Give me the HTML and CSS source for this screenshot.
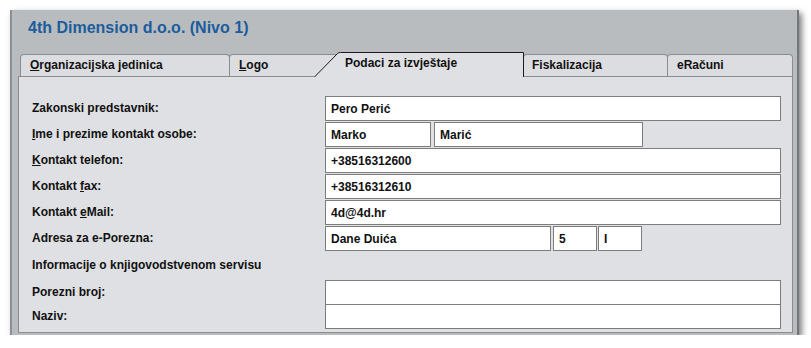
FILE: index.html
```html
<!DOCTYPE html>
<html lang="hr">
<head>
  <meta charset="UTF-8" />
  <meta name="viewport" content="width=device-width, initial-scale=1.0"/>
  <title>4th Dimension d.o.o. - Podaci za izvještaje</title>
  <link rel="stylesheet" href="styles.css">
</head>
<body>
  <div class="window">
    <h1 class="title">4th Dimension d.o.o. (Nivo 1)</h1>

    <div class="tabs">
      <div class="tab tab-org"><u>O</u>rganizacijska jedinica</div>
      <div class="tab tab-logo"><u>L</u>ogo</div>
      <div class="tab-active">
        <svg class="tab-shape" width="210" height="25" viewBox="0 0 210 25">
          <path d="M0 25 L23.5 1.5 Q24.5 0.5 26.5 0.5 L209.5 0.5 L209.5 25 Z" fill="#dfe0e3"/>
          <path d="M0.5 25 L23.5 1.5 Q24.5 0.5 26.5 0.5 L209.5 0.5 L209.5 25" fill="none" stroke="#1c1c1c" stroke-width="1"/>
        </svg>
        <span>Podaci za izvještaje</span>
      </div>
      <div class="tab tab-fisk">Fiskalizacija</div>
      <div class="tab tab-erac">eRačuni</div>
    </div>

    <div class="panel">
      <div class="form">
        <label>Zakonski predstavnik:</label>
        <div class="fields"><input class="full" type="text" value="Pero Perić"></div>

        <label><u>I</u>me i prezime kontakt osobe:</label>
        <div class="fields">
          <input class="first-name" type="text" value="Marko">
          <input class="last-name" type="text" value="Marić">
        </div>

        <label><u>K</u>ontakt telefon:</label>
        <div class="fields"><input class="full" type="text" value="+38516312600"></div>

        <label>Kontakt <u>f</u>ax:</label>
        <div class="fields"><input class="full" type="text" value="+38516312610"></div>

        <label>Kontakt <u>e</u>Mail:</label>
        <div class="fields"><input class="full" type="text" value="4d@4d.hr"></div>

        <label>Adresa za e-Porezna:</label>
        <div class="fields address">
          <input class="street" type="text" value="Dane Duića">
          <input class="house-no" type="text" value="5">
          <input class="house-ext" type="text" value="I">
        </div>

        <label class="section">Informacije o knjigovodstvenom servisu</label>

        <label>Porezni broj:</label>
        <div class="fields"><input class="full" type="text" value=""></div>

        <label>Naziv:</label>
        <div class="fields"><input class="full" type="text" value=""></div>
      </div>
    </div>
  </div>
</body>
</html>
```

FILE: styles.css
```css
body {
  margin: 0;
  background: #ffffff;
  font-family: "Liberation Sans", Arial, sans-serif;
  color: #111;
}
.window {
  margin: 10px 0 0 10px;
  width: 789px;
  height: 325px;
  box-sizing: border-box;
  background: #b9bcbf;
  border-left: 2px solid #8c8f93;
  border-right: 2px solid #74777a;
  box-shadow: 3px 3px 6px rgba(0, 0, 0, 0.5);
  padding: 0 4px 2px 6px;
  display: flex;
  flex-direction: column;
}
.title {
  margin: 0;
  padding: 9px 0 0 10px;
  font-size: 16px;
  line-height: 18px;
  font-weight: bold;
  color: #1b5c9c;
}

/* tabs */
.tabs {
  display: flex;
  align-items: flex-end;
  height: 24px;
  margin-top: 15px;
  padding-left: 2px;
}
.tab {
  height: 22px;
  box-sizing: border-box;
  background: #dcdde0;
  border: 1px solid #8c8c8c;
  border-bottom: none;
  border-radius: 4px 4px 0 0;
  padding-left: 9px;
  font-size: 12px;
  font-weight: bold;
  line-height: 20px;
  white-space: nowrap;
}
.tab-org {
  width: 210px;
}
.tab-logo {
  width: 110px;
  margin-left: -1px;
}
.tab-fisk {
  width: 145px;
  margin-left: 0;
  padding-left: 8px;
}
.tab-erac {
  width: 126px;
  margin-left: -1px;
}
.tab-active {
  position: relative;
  z-index: 1;
  align-self: flex-start;
  width: 210px;
  height: 25px;
  margin-left: -25px;
  margin-right: -1px;
  padding: 1px 0 0 31px;
  box-sizing: border-box;
  font-size: 12px;
  font-weight: bold;
  line-height: 20px;
  white-space: nowrap;
}
.tab-shape {
  position: absolute;
  left: 0;
  top: 0;
}
.tab-active span {
  position: relative;
}

/* panel */
.panel {
  flex: 1;
  background: #dfe0e3;
  border: 1px solid #8c8c8c;
  padding: 19px 11px 0 13px;
}
.form {
  display: grid;
  grid-template-columns: 293px 1fr;
  grid-auto-rows: 25px;
  row-gap: 1px;
}
.form label {
  font-size: 12px;
  font-weight: bold;
  line-height: 25px;
  white-space: nowrap;
}
.form label.section {
  grid-column: 1 / 3;
  height: 27px;
  line-height: 27px;
  margin-bottom: -2px;
}
.form .section + label {
  margin-top: 2px;
}
.form .section + label + .fields {
  margin-top: 2px;
}
.fields {
  display: flex;
}
input {
  height: 25px;
  box-sizing: border-box;
  margin: 0;
  border: 1px solid #7d7d7d;
  background: #ffffff;
  padding: 0 5px;
  font-family: "Liberation Sans", Arial, sans-serif;
  font-size: 12px;
  font-weight: bold;
  color: #111;
  outline: none;
}
.full {
  width: 100%;
}
.first-name {
  width: 106px;
  margin-right: 3px;
}
.last-name {
  width: 209px;
}
.street {
  width: 226px;
  margin-right: 2px;
}
.house-no {
  width: 44px;
  margin-right: 1px;
}
.house-ext {
  width: 44px;
}
```
